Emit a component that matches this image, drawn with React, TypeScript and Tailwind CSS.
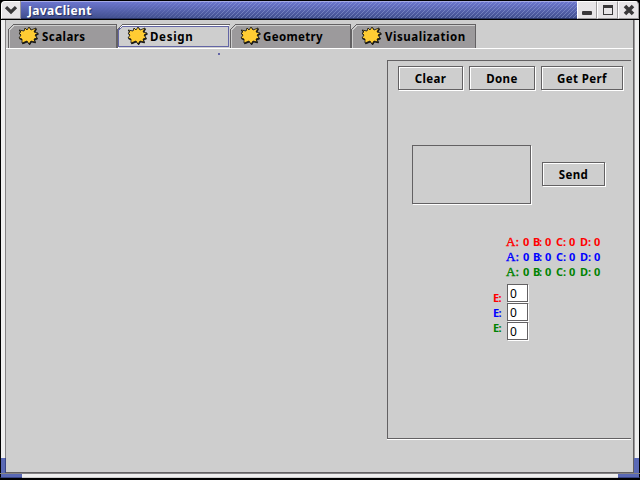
import React from "react";

const FONT = "font-['Noto_Sans','DejaVu_Sans',sans-serif]";

const BURST = "M1 4 L6 5 L7 2 L9 4 L11 1 L13 4 L18 2 L16 6 L20 7 L17 9 L19 12 L16 13 L17 16 L13 15 L11 18 L9 15 L4 17 L4 13 L1 12 L3 9 L1 7 L3 6 Z";

function Burst() {
  return (
    <svg width="21" height="20" viewBox="0 0 21 20" className="shrink-0">
      <path d={BURST} transform="translate(0.6 0.9)" fill="#111" stroke="#111" strokeWidth="0.8" />
      <path d={BURST} fill="#ffcc33" stroke="#111" strokeWidth="0.8" />
    </svg>
  );
}

type TabProps = { label: string; tab: string; text: string; active?: boolean; d: string; w: number };

function Tab({ label, tab, text, active, d, w }: TabProps) {
  return (
    <div className={`relative h-6 shrink-0 ${tab}`}>
      <svg width={w} height="24" className="absolute left-0 top-0" shapeRendering="crispEdges">
        <path d={`M0 24V6L6 0H${w}V24Z`} fill={active ? "#cecece" : "#9c9a9c"} />
        <path d={d} fill="none" stroke="#636163" />
        <path d={`M1.5 24V6L6 1.5H${w - 1}`} fill="none" stroke={active ? "#fff" : "#cecece"} />
        {active && <path d={`M1.5 22.5V6L5.5 2.5H${w - 1.5}V22.5Z`} fill="none" stroke="#6365a5" />}
      </svg>
      <div className="relative flex h-full items-center pl-[10px]">
        <Burst />
        <span className={`ml-[2px] mt-[2px] text-[11.5px] font-bold leading-4 whitespace-nowrap ${text}`}>{label}</span>
      </div>
    </div>
  );
}

function Button({ label, className }: { label: string; className: string }) {
  return (
    <button className={`flex items-center justify-center border border-[#636163] pt-[2px] text-[11.5px] font-bold leading-none tracking-[0.4px] [box-shadow:1px_1px_0_#fff,inset_1px_1px_0_#fff] ${className}`}>
      {label}
    </button>
  );
}

function Readout({ color }: { color: string }) {
  return (
    <div className={`flex h-[15px] items-center text-[11px] font-bold leading-none ${color}`}>
      <span className="w-[17px] font-['Liberation_Serif',serif] text-[13px] font-normal [-webkit-text-stroke:0.4px]">A:</span>
      <span className="w-[10px]">0</span>
      <span className="w-[12px] tracking-[-1.2px]">B:</span>
      <span className="w-[11px]">0</span>
      <span className="w-[13px]">C:</span>
      <span className="w-[11px]">0</span>
      <span className="w-[14px]">D:</span>
      <span>0</span>
    </div>
  );
}

function Field() {
  return (
    <input
      defaultValue="0"
      className="block h-[18px] w-[21px] border border-[#636163] bg-white pl-[2px] text-[12px] leading-none [box-shadow:1px_1px_0_#fff] outline-none"
    />
  );
}

function WindowButton({ children, className }: { children: React.ReactNode; className: string }) {
  return (
    <div className={`flex h-[18px] items-center justify-center border border-l-white border-t-white border-r-[#9c9a9c] border-b-[#9c9a9c] bg-[#e7e5e7] ${className}`}>
      {children}
    </div>
  );
}

export default function App() {
  return (
    <div className={`flex h-[480px] w-[640px] flex-col overflow-hidden bg-black text-black ${FONT}`}>
      <header className="mt-px flex h-[19px] shrink-0 pl-px">
        <WindowButton className="w-5 rounded-tl-[4px]">
          <svg width="14" height="10" viewBox="0 0 14 10">
            <path d="M2 2.2 L7 7 L12 2.2" fill="none" stroke="#393839" strokeWidth="3.2" />
          </svg>
        </WindowButton>
        <div className="flex h-[18px] w-[556px] border-t border-b border-t-[#a5aae7] border-b-[#293363] bg-linear-to-b from-[#6b75ce] to-[#42508f] pl-[7px]">
          <span className="pt-[3px] text-[12px] font-bold leading-none tracking-[0.35px] text-white [text-shadow:1px_1px_0_#293363]">JavaClient</span>
          <div className="flex-1 bg-[repeating-linear-gradient(135deg,#a0b0e070_0px,#a0b0e070_1.2px,transparent_1.2px,transparent_2.83px)] [mask-image:linear-gradient(to_right,transparent,black_140px)]" />
        </div>
        <WindowButton className="w-[20px]">
          <span className="mt-[6px] h-[4px] w-[10px] rounded-[1px] bg-[#393839]" />
        </WindowButton>
        <WindowButton className="w-[21px]">
          <span className="h-[10px] w-[10px] border border-t-[3px] border-[#393839]" />
        </WindowButton>
        <WindowButton className="w-[21px] rounded-tr-[4px]">
          <svg width="12" height="12" viewBox="0 0 12 12">
            <path d="M2 2 L10 10 M10 2 L2 10" stroke="#393839" strokeWidth="3.6" />
          </svg>
        </WindowButton>
      </header>

      <div className="flex h-[453px] shrink-0">
        <div className="flex w-[6px] flex-col">
          <div className="h-[438px] border-l border-l-black border-r border-r-[#848284] bg-[#efefef]" />
          <div className="flex-1 border-l border-l-black border-r border-r-[#394584] bg-[#5a69b5]" />
        </div>
        <main className="flex w-[628px] flex-col border-r border-b border-[#636163] bg-[#cecece]">
          <nav className="mt-1 flex h-6 shrink-0 pl-[2px]">
            <Tab label="Scalars" tab="w-[109px]" text="pl-px tracking-[0.45px]" w={109} d="M0.5 24V6L6 0.5H108.5V24" />
            <Tab label="Design" tab="w-[113px]" text="tracking-[0.7px]" w={113} active d="M0.5 24V6L6 0.5H113" />
            <Tab label="Geometry" tab="w-[121px]" text="tracking-[0.35px]" w={121} d="M0.5 24V6L6 0.5H120.5V24" />
            <Tab label="Visualization" tab="w-[125px]" text="pl-px tracking-[0.55px]" w={125} d="M0.5 24V6L6 0.5H124.5V24" />
          </nav>
          <div className="flex flex-1 border-t border-t-white">
            <div className="h-full w-[381px] pl-[212px] pt-[4px]">
              <div className="h-[2px] w-[2px] bg-[#6365a5]" />
            </div>
            <section className="mt-[11px] h-[379px] w-[244px] border-t border-b border-l border-[#636163] [box-shadow:0_1px_0_#fff]">
              <div className="mt-[5px] flex h-[25px] gap-[6px] pl-[10px]">
                <Button label="Clear" className="h-[24px] w-[65px]" />
                <Button label="Done" className="h-[24px] w-[66px]" />
                <Button label="Get Perf" className="h-[24px] w-[82px]" />
              </div>
              <div className="mt-[54px] flex items-start pl-[24px]">
                <div className="h-[59px] w-[119px] border border-[#636163] [box-shadow:1px_1px_0_#fff]" />
                <Button label="Send" className="ml-[11px] mt-[17px] h-[24px] w-[63px]" />
              </div>
              <div className="mt-[30px] pl-[118px]">
                <Readout color="text-[#ff0000]" />
                <Readout color="text-[#0000ff]" />
                <Readout color="text-[#008200]" />
              </div>
              <div className="mt-[5px] flex pl-[105px]">
                <div className="mt-[6px] w-[14px] text-[11px] font-bold leading-[15px] tracking-[-0.6px]">
                  <div className="text-[#ff0000]">E:</div>
                  <div className="text-[#0000ff]">E:</div>
                  <div className="text-[#008200]">E:</div>
                </div>
                <div className="flex flex-col gap-px">
                  <Field />
                  <Field />
                  <Field />
                </div>
              </div>
            </section>
          </div>
        </main>
        <div className="flex w-[6px] flex-col">
          <div className="h-[438px] border-l border-l-[#9c9a9c] border-r border-r-black bg-[#efefef]" />
          <div className="flex-1 border-r border-black bg-[#5a69b5]" />
        </div>
      </div>
      <footer className="flex h-[6px] shrink-0 border-t border-b border-t-[#848284] border-b-black bg-[#efefef]">
        <div className="w-[22px] border-b border-l border-b-[#394584] border-l-black bg-[#5a69b5]" />
        <div className="flex-1 border-b border-[#cecece]" />
        <div className="w-[22px] border-b border-r border-b-[#394584] border-r-black bg-[#5a69b5]" />
      </footer>
    </div>
  );
}
